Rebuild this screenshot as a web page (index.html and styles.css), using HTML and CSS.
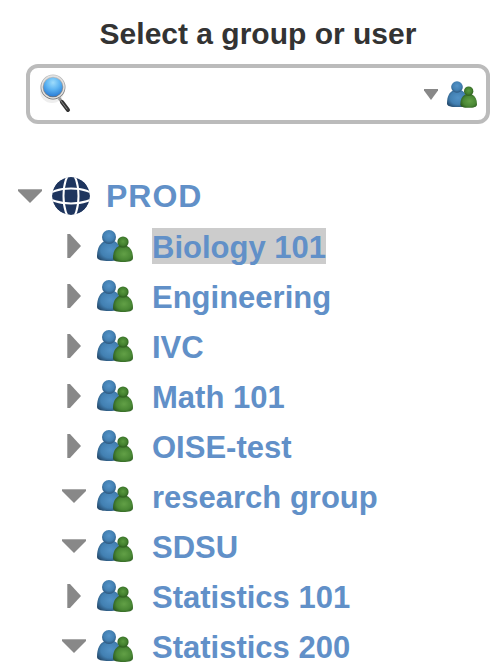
FILE: index.html
```html
<!DOCTYPE html>
<html lang="en">
<head>
<meta charset="utf-8">
<title>Select a group or user</title>
<link rel="stylesheet" href="styles.css">
</head>
<body>
<svg class="defs" width="0" height="0" aria-hidden="true">
  <defs>
    <radialGradient id="blueHead" cx=".5" cy=".4" r=".62">
      <stop offset="0" stop-color="#5594c8"/><stop offset=".6" stop-color="#4280b3"/><stop offset="1" stop-color="#2a5378"/>
    </radialGradient>
    <radialGradient id="blueBody" cx=".55" cy=".45" r=".65">
      <stop offset="0" stop-color="#5292c6"/><stop offset=".6" stop-color="#4280b2"/><stop offset="1" stop-color="#24496b"/>
    </radialGradient>
    <radialGradient id="greenHead" cx=".5" cy=".45" r=".62">
      <stop offset="0" stop-color="#5a993f"/><stop offset=".55" stop-color="#43802e"/><stop offset="1" stop-color="#234d18"/>
    </radialGradient>
    <radialGradient id="greenBody" cx=".55" cy=".5" r=".62">
      <stop offset="0" stop-color="#62a046"/><stop offset=".6" stop-color="#4a8835"/><stop offset="1" stop-color="#28551b"/>
    </radialGradient>
    <radialGradient id="lens" cx=".5" cy=".3" r=".7">
      <stop offset="0" stop-color="#9edcfb"/><stop offset=".45" stop-color="#5db4f2"/><stop offset="1" stop-color="#1f70cf"/>
    </radialGradient>
    <linearGradient id="rim" x1="0" y1="0" x2="0" y2="1">
      <stop offset="0" stop-color="#c2c2c2"/><stop offset="1" stop-color="#6c6c6c"/>
    </linearGradient>
    <symbol id="people" viewBox="0 0 36 32">
      <path fill="url(#blueBody)" d="M0 27C0 18 3 13 8 11h9c5 2 7 7 7 16 0 3-5 4-12 4S0 30 0 27z"/>
      <circle cx="12" cy="7" r="7" fill="url(#blueHead)"/>
      <path fill="url(#greenBody)" d="M16 28c0-6 2-10 6-12h8c4 2 6 6 6 12 0 3-4 4-10 4s-10-1-10-4z"/>
      <circle cx="26" cy="12" r="5.6" fill="url(#greenHead)"/>
    </symbol>
    <symbol id="down" viewBox="0 0 24 14">
      <path fill="#888" d="M0 0h24v2L12 14 0 2z"/><path fill="#aaa" d="M0 0h24v1H0z"/>
    </symbol>
    <symbol id="right" viewBox="0 0 14 24">
      <path fill="#888" d="M0 0h3l11 12L3 24H0z"/><path fill="#aaa" d="M0 0h1v24H0z"/>
    </symbol>
  </defs>
</svg>

<main class="picker">
  <h1 class="title"><label for="search">Select a group or user</label></h1>
  <div class="search">
    <svg class="magnifier" viewBox="0 0 32 40" aria-hidden="true">
      <ellipse cx="12" cy="17" rx="12" ry="12" fill="#eee"/>
      <path d="M19 24l3 4" stroke="#999" stroke-width="3"/>
      <path d="M22 28l6 8" stroke="#333" stroke-width="4" stroke-linecap="round"/>
      <path d="M21 27l6 8" stroke="#888" stroke-width="1" stroke-linecap="round"/>
      <circle cx="13" cy="13" r="11" fill="url(#lens)" stroke="url(#rim)" stroke-width="3"/>
      <circle cx="13" cy="13" r="11" fill="none" stroke="#e2e2e2" stroke-width="1.4"/>
    </svg>
    <input class="field" id="search" type="text">
    <button class="filter" type="button" aria-label="Groups and users">
      <svg class="caret" viewBox="0 0 24 14" preserveAspectRatio="none"><path fill="#888" d="M0 0h24v2L12 14 0 2z"/></svg>
      <svg class="people-small"><use href="#people"/></svg>
    </button>
  </div>

  <ul class="tree">
    <li>
      <div class="row root">
        <button class="toggle" type="button" aria-label="Collapse PROD"><svg class="down"><use href="#down"/></svg></button>
        <svg class="globe" viewBox="0 0 38 38" aria-hidden="true">
          <circle cx="19" cy="19" r="19" fill="#1e355e"/>
          <g fill="none" stroke="#fff" stroke-width="2">
            <ellipse cx="19" cy="19" rx="7.5" ry="22"/>
            <ellipse cx="19" cy="19" rx="22" ry="7.5"/>
          </g>
        </svg>
        <a class="name" href="#">PROD</a>
      </div>
      <ul class="branch">
        <li class="row"><button class="toggle" type="button" aria-label="Expand Biology 101"><svg class="right"><use href="#right"/></svg></button><svg class="people"><use href="#people"/></svg><a class="name selected" href="#">Biology 101</a></li>
        <li class="row"><button class="toggle" type="button" aria-label="Expand Engineering"><svg class="right"><use href="#right"/></svg></button><svg class="people"><use href="#people"/></svg><a class="name" href="#">Engineering</a></li>
        <li class="row"><button class="toggle" type="button" aria-label="Expand IVC"><svg class="right"><use href="#right"/></svg></button><svg class="people"><use href="#people"/></svg><a class="name" href="#">IVC</a></li>
        <li class="row"><button class="toggle" type="button" aria-label="Expand Math 101"><svg class="right"><use href="#right"/></svg></button><svg class="people"><use href="#people"/></svg><a class="name" href="#">Math 101</a></li>
        <li class="row"><button class="toggle" type="button" aria-label="Expand OISE-test"><svg class="right"><use href="#right"/></svg></button><svg class="people"><use href="#people"/></svg><a class="name" href="#">OISE-test</a></li>
        <li class="row"><button class="toggle" type="button" aria-label="Collapse research group"><svg class="down"><use href="#down"/></svg></button><svg class="people"><use href="#people"/></svg><a class="name" href="#">research group</a></li>
        <li class="row"><button class="toggle" type="button" aria-label="Collapse SDSU"><svg class="down"><use href="#down"/></svg></button><svg class="people"><use href="#people"/></svg><a class="name" href="#">SDSU</a></li>
        <li class="row"><button class="toggle" type="button" aria-label="Expand Statistics 101"><svg class="right"><use href="#right"/></svg></button><svg class="people"><use href="#people"/></svg><a class="name" href="#">Statistics 101</a></li>
        <li class="row"><button class="toggle" type="button" aria-label="Collapse Statistics 200"><svg class="down"><use href="#down"/></svg></button><svg class="people"><use href="#people"/></svg><a class="name" href="#">Statistics 200</a></li>
      </ul>
    </li>
  </ul>
</main>
</body>
</html>
```
FILE: styles.css
```css
* { box-sizing: border-box; }

body {
  margin: 0;
  background: #fff;
  font-family: "Liberation Sans", Arial, sans-serif;
  font-size: 31px;
  font-weight: bold;
  line-height: 36px;
}

svg { display: block; flex: none; }
.defs { position: absolute; }

button {
  border: 0;
  padding: 0;
  background: none;
  cursor: pointer;
}

.picker { padding: 16px 6px 0 18px; }

.title {
  margin: 0 0 12px 8px;
  font-size: 30px;
  text-align: center;
  color: #333;
}

.search {
  display: flex;
  align-items: center;
  height: 60px;
  margin-left: 8px;
  padding: 0 9px 0 10px;
  border: 4px solid #bbb;
  border-radius: 12px;
}

.magnifier { width: 32px; height: 40px; }

.field {
  flex: 1;
  min-width: 0;
  margin: 0 8px;
  border: 0;
  outline: 0;
  background: none;
  font: inherit;
  color: #333;
}

.filter { display: flex; align-items: center; gap: 9px; }
.caret { width: 14px; height: 11px; }
.people-small { width: 30px; height: 27px; }

.tree, .branch {
  margin: 0;
  padding: 0;
  list-style: none;
}

.tree { margin-top: 53px; }

.branch {
  display: flex;
  flex-direction: column;
  gap: 14px;
  margin: 13px 0 0 44px;
}

.row { display: flex; align-items: center; }

.toggle {
  display: flex;
  justify-content: center;
  width: 24px;
  margin-right: 11px;
}

.root .toggle { margin-right: 10px; }
.down { width: 24px; height: 14px; }
.right { width: 14px; height: 24px; }
.globe { width: 38px; height: 38px; margin-right: 16px; border-radius: 50%; }
.people { width: 36px; height: 32px; margin-right: 19px; }

.name {
  color: #6190c8;
  text-decoration: none;
}

.branch .name {
  padding-top: 4px;
  line-height: 32px;
}

.root .name { font-size: 32px; letter-spacing: 1px; }
.selected { background: #ccc; }
```
